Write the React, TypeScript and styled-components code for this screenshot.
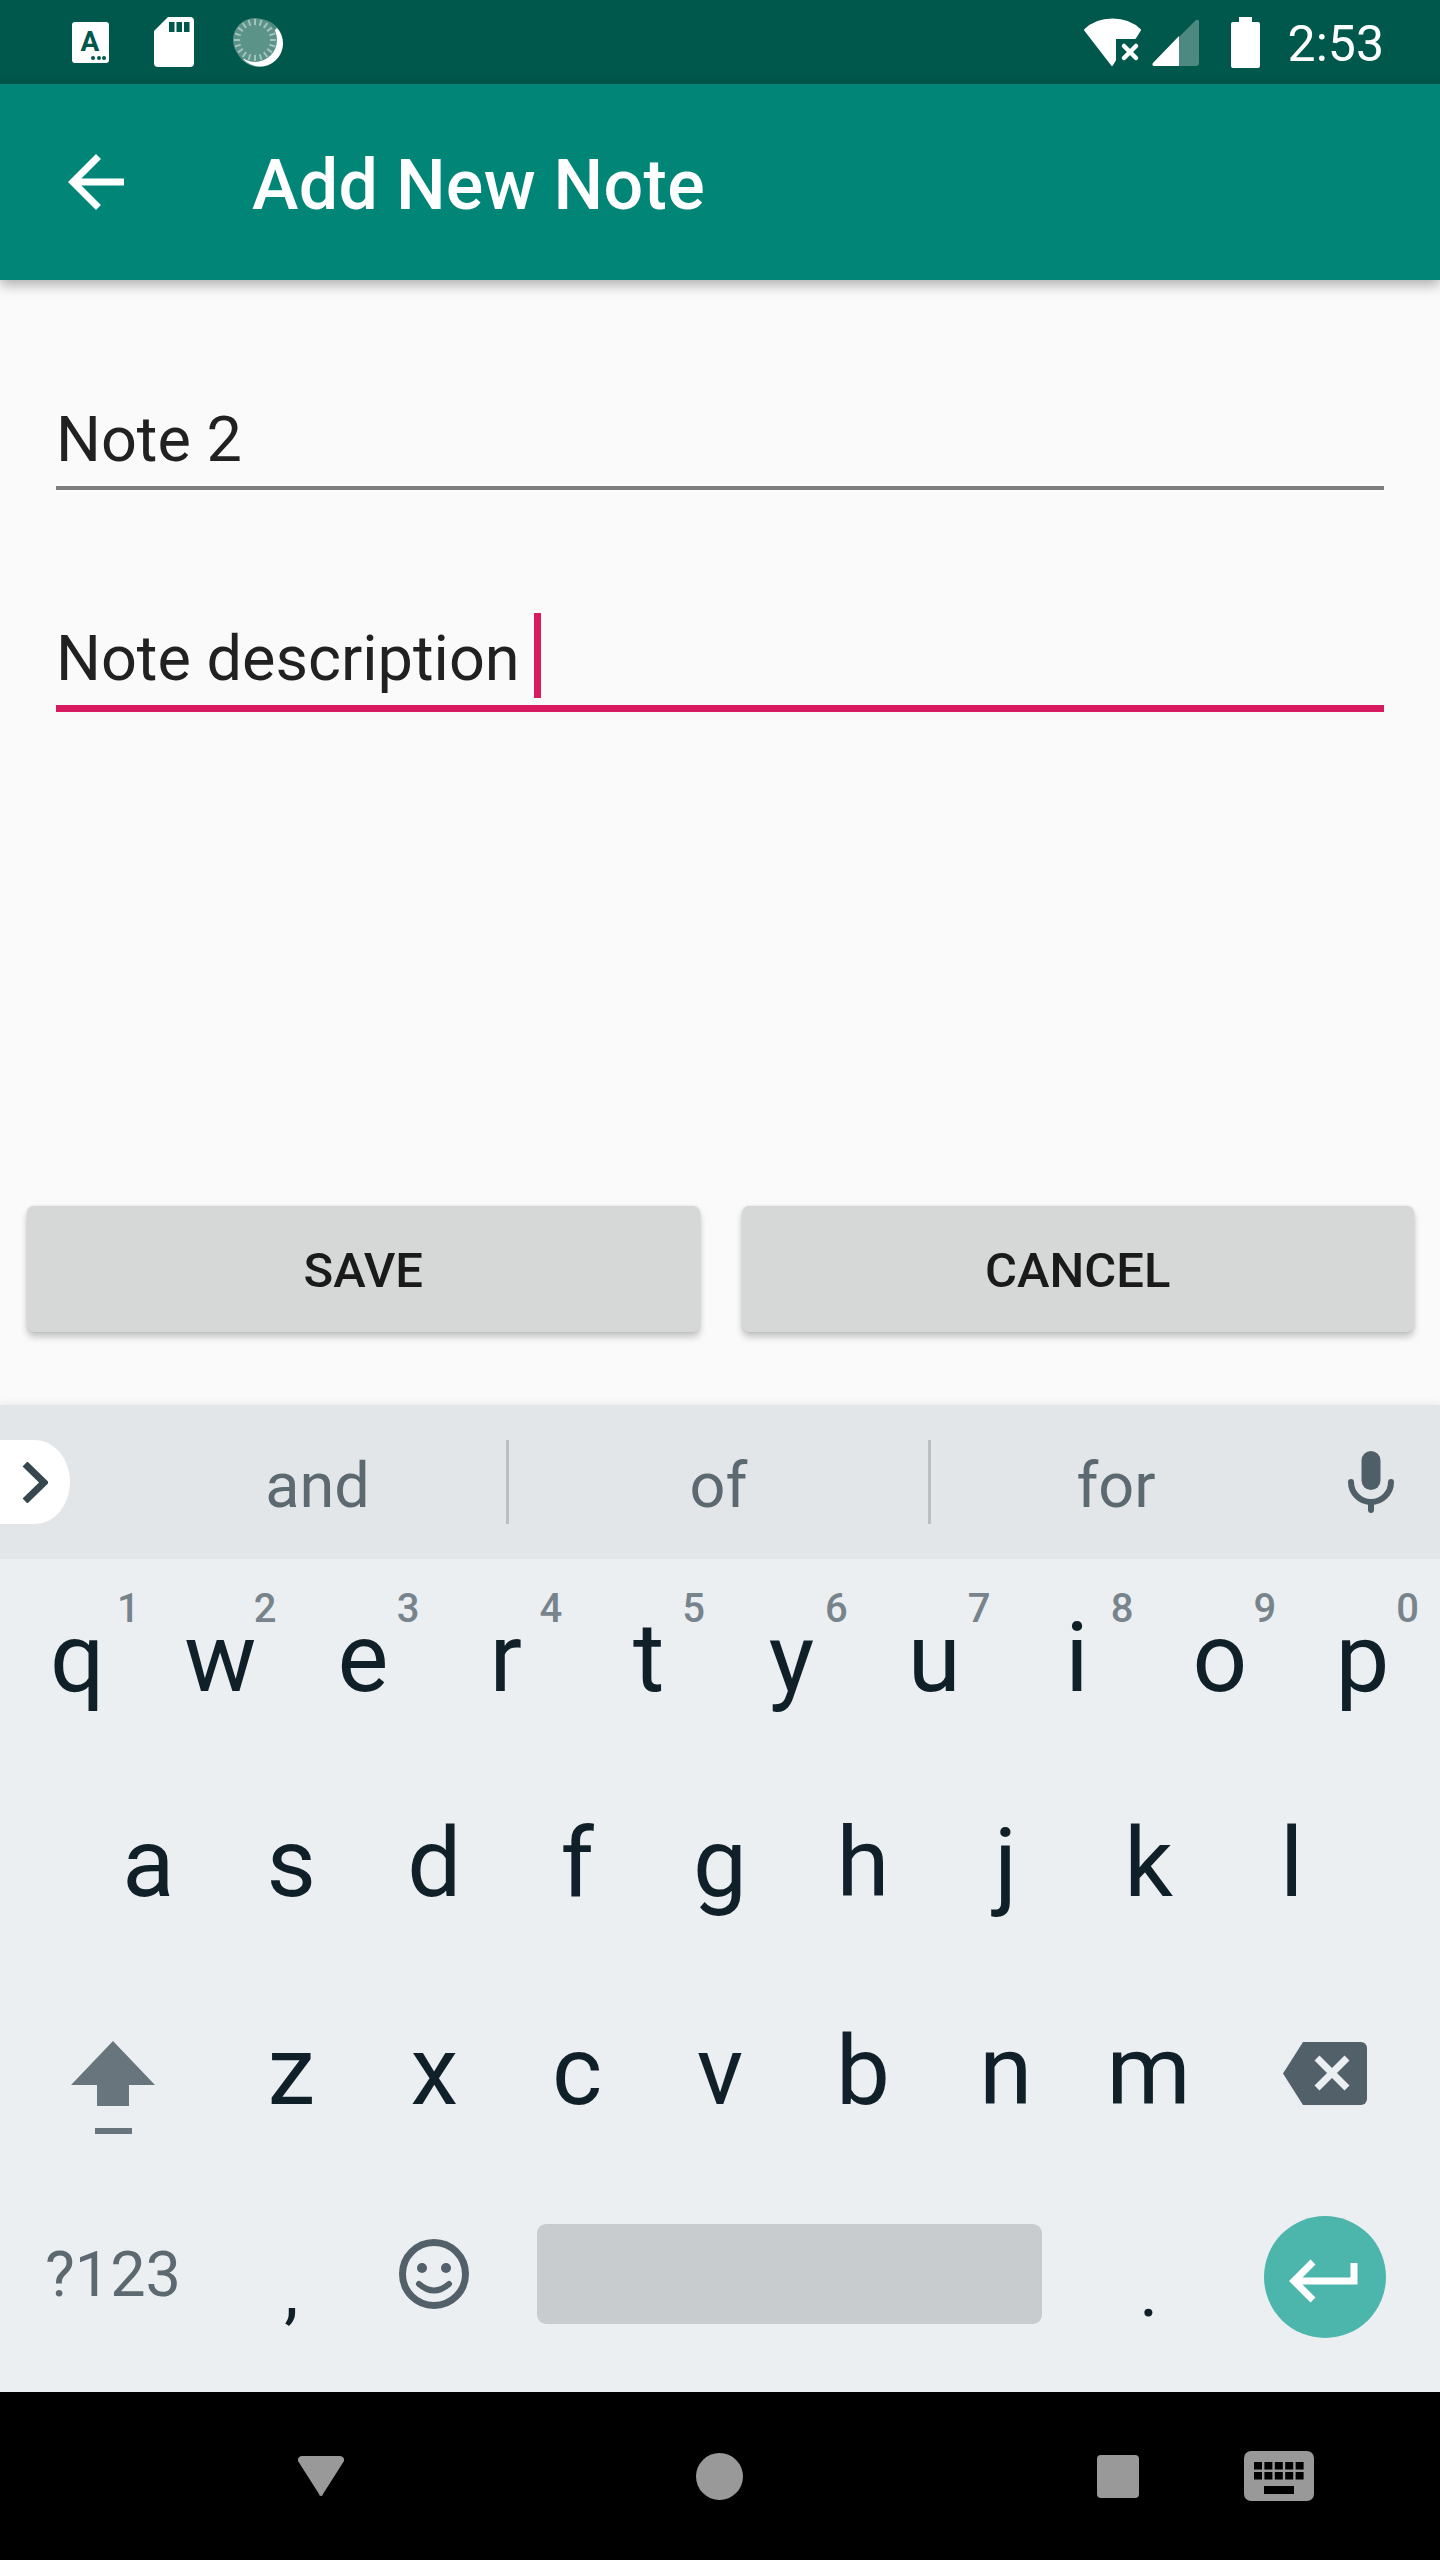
// App.tsx - "Add New Note" Android screen with the on-screen keyboard
import React from "react";
import styled, { createGlobalStyle } from "styled-components";

const GlobalStyle = createGlobalStyle`
  html, body {
    margin: 0;
    padding: 0;
    background: #000;
  }
  body {
    font-family: Roboto, "Noto Sans", sans-serif;
  }
`;

const Screen = styled.div`
  width: 1440px;
  height: 2560px;
  display: flex;
  flex-direction: column;
  background: #fafafa;
  overflow: hidden;
`;

const StatusBar = styled.div`
  height: 84px;
  flex: none;
  display: flex;
  align-items: center;
  justify-content: space-between;
  padding: 0 56px 0 72px;
  box-sizing: border-box;
  background: #00574b;
  color: #fff;
`;

const StatusGroup = styled.div`
  display: flex;
  align-items: center;
`;

const StatusIcon = styled.svg<{ $left?: number }>`
  display: block;
  flex: none;
  margin-left: ${(p) => p.$left ?? 0}px;
`;

const Clock = styled.span`
  margin: 5px 0 0 28px;
  font-size: 50px;
  line-height: 79px;
`;

const AppBar = styled.header`
  height: 196px;
  flex: none;
  position: relative;
  z-index: 2;
  display: flex;
  align-items: center;
  padding-left: 54px;
  background: #008577;
  color: #fff;
  box-shadow: 0 5px 12px rgba(0, 0, 0, 0.3);
`;

const BackIcon = styled.svg`
  width: 84px;
  height: 84px;
  flex: none;
  fill: #fff;
`;

const Title = styled.h1`
  margin: 6px 0 0 114px;
  font-size: 70px;
  font-weight: 500;
  line-height: 84px;
  letter-spacing: 0.3px;
`;

const Form = styled.main`
  flex: 1;
  display: flex;
  flex-direction: column;
  padding-top: 123px;
`;

const Field = styled.div<{ $focused?: boolean }>`
  margin: 0 56px ${(p) => (p.$focused ? 0 : 132)}px;
  padding: 0 0 9px;
  display: flex;
  font-size: 63px;
  line-height: 74px;
  color: #212121;
  border-bottom: ${(p) => (p.$focused ? "7px solid #d81b60" : "4px solid #7d7d7d")};
`;

const FieldText = styled.span`
  white-space: pre;
`;

const Caret = styled.i`
  width: 7px;
  height: 85px;
  margin: -9px 0 -2px 14px;
  background: #d81b60;
`;

const ButtonRow = styled.div`
  margin-top: auto;
  display: flex;
  gap: 42px;
  padding: 0 26px 73px 27px;
`;

const ActionButton = styled.button`
  flex: 1;
  height: 126px;
  padding: 3px 0 0;
  border: none;
  border-radius: 7px;
  background: #d6d7d7;
  color: #1a1a1a;
  font-family: inherit;
  font-size: 49px;
  font-weight: 500;
  box-shadow: 0 5px 7px rgba(0, 0, 0, 0.22), 0 0 3px rgba(0, 0, 0, 0.1);
`;

const Keyboard = styled.section`
  height: 987px;
  flex: none;
  display: flex;
  flex-direction: column;
  background: #eceff2;
  box-shadow: 0 -3px 6px rgba(0, 0, 0, 0.05);
`;

const SuggestionStrip = styled.div`
  height: 154px;
  flex: none;
  display: grid;
  grid-template-columns: 129px 380px 422px 370px 139px;
  align-items: center;
  background: #e3e6e9;
`;

const ExpandPill = styled.div`
  width: 70px;
  height: 84px;
  display: flex;
  align-items: center;
  justify-content: center;
  background: #fff;
  border-radius: 0 50% 50% 0 / 0 50% 50% 0;
`;

const Suggestion = styled.div<{ $divider?: boolean }>`
  height: 84px;
  box-sizing: border-box;
  padding-top: 8px;
  text-align: center;
  font-size: 63px;
  line-height: 76px;
  color: #5c6970;
  border-right: ${(p) => (p.$divider ? "3px solid #b9bfc3" : "none")};
`;

const MicCell = styled.div`
  display: flex;
  justify-content: center;
`;

const KeyRows = styled.div`
  display: flex;
  flex-direction: column;
`;

const KeyRow = styled.div<{ $height: number; $inset?: number }>`
  height: ${(p) => p.$height}px;
  box-sizing: border-box;
  display: flex;
  align-items: stretch;
  padding: 0 ${(p) => p.$inset ?? 6}px;
`;

const Key = styled.div`
  position: relative;
  flex: 1 1 0;
  display: flex;
  align-items: center;
  justify-content: center;
  font-size: 96px;
  line-height: 1;
  color: #102028;
`;

const WideKey = styled(Key)`
  flex: none;
  width: 214px;
`;

const KeyHint = styled.span<{ $right: number }>`
  position: absolute;
  top: 30px;
  right: ${(p) => p.$right}px;
  font-size: 40px;
  font-weight: 500;
  line-height: 1;
  color: #78848c;
`;

const ShiftIcon = styled.svg`
  margin-top: 33px;
`;

const DeleteIcon = styled.svg`
  margin: 5px 4px 0 0;
`;

const SymbolsKey = styled(WideKey)`
  font-size: 63px;
  color: #5c6970;
`;

const PunctuationKey = styled(Key)`
  font-size: 72px;
  padding-top: 36px;
  box-sizing: border-box;
`;

const SpaceKey = styled.div`
  flex: none;
  width: 572px;
  box-sizing: border-box;
  display: flex;
  align-items: center;
  padding: 0 35px 0 32px;
`;

const SpaceBar = styled.div`
  flex: 1;
  height: 100px;
  border-radius: 9px;
  background: #c8cccf;
`;

const EnterButton = styled.div`
  width: 122px;
  height: 122px;
  margin: 6px 4px 0 0;
  border-radius: 50%;
  background: #4db6ac;
`;

const NavBar = styled.nav`
  height: 168px;
  flex: none;
  display: flex;
  align-items: center;
  background: #000;
`;

const NavIcon = styled.svg<{ $left: number }>`
  display: block;
  flex: none;
  margin-left: ${(p) => p.$left}px;
  fill: #999;
`;

const TOP_ROW = ["q", "w", "e", "r", "t", "y", "u", "i", "o", "p"];
const HINTS = ["1", "2", "3", "4", "5", "6", "7", "8", "9", "0"];
const HOME_ROW = ["a", "s", "d", "f", "g", "h", "j", "k", "l"];
const BOTTOM_ROW = ["z", "x", "c", "v", "b", "n", "m"];

const spinnerTicks = Array.from({ length: 20 }, (_, i) => (i * Math.PI) / 10);

const SpinnerIcon = () => (
  <StatusIcon $left={39} width="50" height="50" viewBox="0 0 50 50">
    <circle cx="26" cy="26" r="24" fill="#fff" opacity="0.3" />
    <path d="M10 42A23 23 0 0 0 44 11Z" fill="#fff" />
    <circle cx="22" cy="23" r="22" fill="#5c9389" />
    {spinnerTicks.map((a) => (
      <line
        key={a}
        x1={22 + Math.cos(a) * 15}
        y1={23 + Math.sin(a) * 15}
        x2={22 + Math.cos(a) * 21}
        y2={23 + Math.sin(a) * 21}
        stroke="#a3c3bd"
        strokeWidth="2"
      />
    ))}
  </StatusIcon>
);

const App: React.FC = () => (
  <Screen>
    <GlobalStyle />
    <StatusBar>
      <StatusGroup>
        <StatusIcon width="37" height="41" viewBox="0 0 37 41">
          <rect width="37" height="41" rx="3" fill="#fff" />
          <text
            x="18"
            y="29"
            textAnchor="middle"
            fontFamily="Roboto, sans-serif"
            fontWeight="700"
            fontSize="28"
            fill="#00574b"
          >
            A
          </text>
          <circle cx="21" cy="36" r="2" fill="#00574b" />
          <circle cx="27" cy="36" r="2" fill="#00574b" />
          <circle cx="32" cy="36" r="2" fill="#00574b" />
        </StatusIcon>
        <StatusIcon $left={45} width="40" height="50" viewBox="0 0 40 50">
          <path d="M14 0H36a4 4 0 0 1 4 4V46a4 4 0 0 1-4 4H4a4 4 0 0 1-4-4V14Z" fill="#fff" />
          <rect x="15" y="5" width="5.5" height="10" fill="#00574b" />
          <rect x="22.5" y="5" width="5.5" height="10" fill="#00574b" />
          <rect x="30" y="5" width="5.5" height="10" fill="#00574b" />
        </StatusIcon>
        <SpinnerIcon />
      </StatusGroup>
      <StatusGroup>
        <StatusIcon width="60" height="50" viewBox="0 0 60 50">
          <path
            d="M2 13C16 -1 43 -1 57 13L52 21H32V43L29 48Z"
            fill="#fff"
            stroke="#fff"
            strokeWidth="2"
            strokeLinejoin="round"
          />
          <path
            d="M41 29L53 41M53 29L41 41"
            stroke="#fff"
            strokeWidth="4.5"
            strokeLinecap="round"
          />
        </StatusIcon>
        <StatusIcon $left={9} width="47" height="47" viewBox="0 0 47 47">
          <path d="M2 47H44a3 3 0 0 0 3-3V3a2 2 0 0 0-3-2L1 44a2 2 0 0 0 1 3Z" fill="#fff" opacity="0.3" />
          <path d="M2 47H27V17L1 44a2 2 0 0 0 1 3Z" fill="#fff" />
        </StatusIcon>
        <StatusIcon $left={32} width="29" height="51" viewBox="0 0 29 51">
          <path d="M8 0H21V5H27a2 2 0 0 1 2 2V49a2 2 0 0 1-2 2H2a2 2 0 0 1-2-2V7a2 2 0 0 1 2-2H8Z" fill="#fff" />
        </StatusIcon>
        <Clock>2:53</Clock>
      </StatusGroup>
    </StatusBar>

    <AppBar>
      <BackIcon viewBox="0 0 24 24">
        <path d="M20 11H7.83l5.59-5.59L12 4l-8 8 8 8 1.41-1.41L7.83 13H20v-2z" />
      </BackIcon>
      <Title>Add New Note</Title>
    </AppBar>

    <Form>
      <Field>
        <FieldText>Note 2</FieldText>
      </Field>
      <Field $focused>
        <FieldText>Note description</FieldText>
        <Caret />
      </Field>
      <ButtonRow>
        <ActionButton>SAVE</ActionButton>
        <ActionButton>CANCEL</ActionButton>
      </ButtonRow>
    </Form>

    <Keyboard>
      <SuggestionStrip>
        <ExpandPill>
          <svg width="26" height="41" viewBox="0 0 26 41">
            <path d="M3 2L22 20.5L3 39" fill="none" stroke="#37474f" strokeWidth="7" />
          </svg>
        </ExpandPill>
        <Suggestion $divider>and</Suggestion>
        <Suggestion $divider>of</Suggestion>
        <Suggestion>for</Suggestion>
        <MicCell>
          <svg width="46" height="62" viewBox="0 0 46 62">
            <rect x="13.5" y="0" width="19" height="39" rx="9.5" fill="#4f5f67" />
            <path
              d="M3 31A20 20 0 0 0 43 31M23 51V59"
              fill="none"
              stroke="#4f5f67"
              strokeWidth="6"
              strokeLinecap="round"
            />
          </svg>
        </MicCell>
      </SuggestionStrip>

      <KeyRows>
        <KeyRow $height={198}>
          {TOP_ROW.map((letter, i) => (
            <Key key={letter}>
              {letter}
              <KeyHint $right={i === 0 ? 9 : 15}>{HINTS[i]}</KeyHint>
            </Key>
          ))}
        </KeyRow>
        <KeyRow $height={212} $inset={77}>
          {HOME_ROW.map((letter) => (
            <Key key={letter}>{letter}</Key>
          ))}
        </KeyRow>
        <KeyRow $height={204}>
          <WideKey>
            <ShiftIcon width="84" height="93" viewBox="0 0 84 93">
              <path d="M42 0L84 44H58V65H26V44H0Z" fill="#68757d" />
              <rect x="24" y="87" width="37" height="6" fill="#68757d" />
            </ShiftIcon>
          </WideKey>
          {BOTTOM_ROW.map((letter) => (
            <Key key={letter}>{letter}</Key>
          ))}
          <WideKey>
            <DeleteIcon width="84" height="63" viewBox="0 0 84 63">
              <path d="M20 0H78a6 6 0 0 1 6 6V57a6 6 0 0 1-6 6H20L0 31.5Z" fill="#526069" />
              <path d="M34 16L64 46M64 16L34 46" stroke="#eceff2" strokeWidth="7" />
            </DeleteIcon>
          </WideKey>
        </KeyRow>
        <KeyRow $height={202}>
          <SymbolsKey>?123</SymbolsKey>
          <PunctuationKey>,</PunctuationKey>
          <Key>
            <svg width="70" height="70" viewBox="0 0 70 70">
              <circle cx="35" cy="35" r="31.5" fill="none" stroke="#526069" strokeWidth="7" />
              <circle cx="23" cy="29" r="5" fill="#526069" />
              <circle cx="47" cy="29" r="5" fill="#526069" />
              <path d="M20 45Q35 58 50 45" fill="none" stroke="#526069" strokeWidth="6" strokeLinecap="round" />
            </svg>
          </Key>
          <SpaceKey>
            <SpaceBar />
          </SpaceKey>
          <PunctuationKey>.</PunctuationKey>
          <WideKey>
            <EnterButton>
              <svg width="122" height="122" viewBox="0 0 122 122">
                <path d="M49 46L30 65L49 84M30 65H90V47" fill="none" stroke="#fff" strokeWidth="7" />
              </svg>
            </EnterButton>
          </WideKey>
        </KeyRow>
      </KeyRows>
    </Keyboard>

    <NavBar>
      <NavIcon $left={298} width="46" height="40" viewBox="0 0 46 40">
        <path d="M4 0H42a4 4 0 0 1 4 5L25 38a2 2 0 0 1-4 0L0 5a4 4 0 0 1 4-5Z" />
      </NavIcon>
      <NavIcon $left={352} width="47" height="47" viewBox="0 0 47 47">
        <circle cx="23.5" cy="23.5" r="23.5" />
      </NavIcon>
      <NavIcon $left={354} width="42" height="43" viewBox="0 0 42 43">
        <rect width="42" height="43" rx="4" />
      </NavIcon>
      <NavIcon $left={105} width="70" height="50" viewBox="0 0 70 50">
        <rect width="70" height="50" rx="7" />
        {[0, 1].map((row) =>
          [0, 1, 2, 3, 4].map((col) => (
            <rect key={`${row}-${col}`} x={10 + col * 10.4} y={11 + row * 10} width="8" height="7.5" fill="#000" />
          ))
        )}
        <rect x="20" y="35" width="30" height="8" fill="#000" />
      </NavIcon>
    </NavBar>
  </Screen>
);

export default App;
